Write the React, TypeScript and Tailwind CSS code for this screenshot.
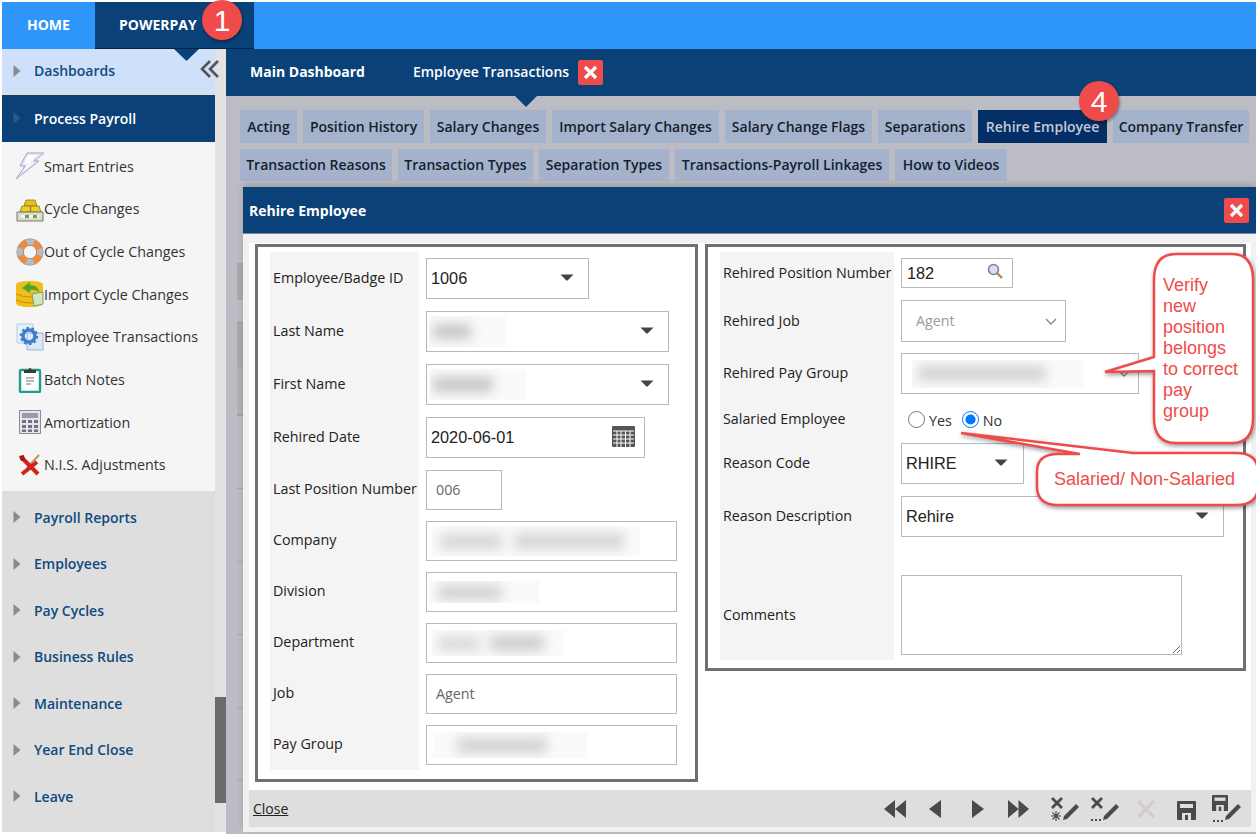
import type { ReactNode } from "react";

function Arrow({ dark }: { dark?: boolean }) {
  return (
    <svg width="8" height="14" viewBox="0 0 8 14" className="shrink-0">
      <path d="M0.5 1 L7.5 7 L0.5 13 Z" fill={dark ? "#33557f" : "#8a8a8a"} />
    </svg>
  );
}

function DropArrow() {
  return (
    <svg width="14" height="7" viewBox="0 0 14 7" className="shrink-0 -mt-[2px]">
      <path d="M0.5 0.5 H13.5 L7.6 6.5 H6.4 Z" fill="#444" />
    </svg>
  );
}

function Bolt() {
  return (
    <svg width="28" height="28" viewBox="0 0 28 28">
      <path d="M11 1 L28 1 L18 9 L23 9 L0 27 L9 14 L4 14 Z" fill="#e6e6f6" stroke="#a6a6c0" strokeWidth="1" />
      <path d="M12 3 L22 3 L14 10 L18 10 L7 20 L12 12 L8 12 Z" fill="#fafaff" />
    </svg>
  );
}

function Gold() {
  return (
    <svg width="28" height="28" viewBox="0 0 28 28">
      <path d="M8 11 L10 5 H19 L21 11 Z" fill="#e7c11b" stroke="#8c7a16" strokeWidth="0.8" />
      <path d="M4 17 L6 11 H14 L15 17 Z M14 17 L15 11 H23 L25 17 Z" fill="#f0cd28" stroke="#8c7a16" strokeWidth="0.8" />
      <path d="M1 17 H27 V26 H1 Z" fill="#d8dccb" stroke="#757b66" strokeWidth="1" />
      <path d="M5 20 H23 V23 H5 Z" fill="#f5f7ee" />
      <path d="M9 20 H13 V23 H9 Z M17 20 H21 V23 H17 Z" fill="#7d9a52" />
    </svg>
  );
}

function Buoy() {
  return (
    <svg width="28" height="28" viewBox="0 0 28 28">
      <circle cx="14" cy="14" r="10" fill="none" stroke="#ee8b3e" strokeWidth="6.5" />
      <circle cx="14" cy="14" r="10" fill="none" stroke="#b4bcc6" strokeWidth="6.5" strokeDasharray="7 8.7" strokeDashoffset="3.5" />
      <circle cx="14" cy="14" r="13.2" fill="none" stroke="#9aa0a8" strokeWidth="0.7" />
      <circle cx="14" cy="14" r="6.6" fill="none" stroke="#a0764e" strokeWidth="0.7" />
    </svg>
  );
}

function ImportCycle() {
  return (
    <svg width="28" height="28" viewBox="0 0 28 28">
      <path d="M0 5 Q0 1 13 1 Q27 1 27 5 V23 Q27 27 13 27 Q0 27 0 23 Z" fill="#f0bd1c" />
      <path d="M0 14 Q13 20 27 14 M0 20 Q13 26 27 20" fill="none" stroke="#c6900e" strokeWidth="1" />
      <path d="M6 8 L14 2 V5 Q22 5 23 12 Q19 9 14 10 V13 Z" fill="#4ea629" />
      <path d="M16 14 L27 12 V24 L18 26 Z" fill="#cfe8b4" stroke="#7d9a7a" strokeWidth="1" />
    </svg>
  );
}

function GearDoc() {
  return (
    <svg width="28" height="28" viewBox="0 0 28 28">
      <path d="M1 1 H17 V20 H1 Z" fill="#e6effa" stroke="#b8cce6" strokeWidth="1" />
      <path d="M11 10 H27 V27 H11 Z" fill="#d9e7f6" stroke="#9ab8d8" strokeWidth="1" />
      <circle cx="13" cy="13" r="6" fill="none" stroke="#3f7fc8" strokeWidth="3.5" />
      <circle cx="13" cy="13" r="8" fill="none" stroke="#3f7fc8" strokeWidth="2.5" strokeDasharray="2.5 2.5" />
    </svg>
  );
}

function Clipboard() {
  return (
    <svg width="24" height="26" viewBox="0 0 24 26">
      <rect x="2" y="3" width="20" height="22" rx="1" fill="#fff" stroke="#1f9d8f" strokeWidth="2.4" />
      <path d="M6 6 H18 V3 H14 Q12 -1 10 3 H6 Z" fill="#3b3b3b" />
      <path d="M8 11 H16 M8 14 H16 M8 17 H13" stroke="#777" strokeWidth="1.2" />
    </svg>
  );
}

function Calc() {
  return (
    <svg width="22" height="24" viewBox="0 0 22 24">
      <rect x="0.5" y="0.5" width="21" height="23" fill="#e4e4ec" stroke="#8a8a9c" />
      <rect x="3" y="3" width="16" height="5" fill="#9a9aa8" />
      <path d="M3 10 H7 V13 H3 Z M9 10 H13 V13 H9 Z M15 10 H19 V13 H15 Z M3 15 H7 V18 H3 Z M9 15 H13 V18 H9 Z M15 15 H19 V18 H15 Z M3 19.5 H7 V22 H3 Z M9 19.5 H13 V22 H9 Z M15 19.5 H19 V22 H15 Z" fill="#70707e" />
    </svg>
  );
}

function Tools() {
  return (
    <svg width="24" height="22" viewBox="0 0 24 22">
      <path d="M21 1 L9 14" stroke="#b79a62" strokeWidth="2" />
      <path d="M3 3 L20 20" stroke="#d3211c" strokeWidth="4" />
      <path d="M19 8 L4 20" stroke="#d3211c" strokeWidth="4" />
      <path d="M1 2 L6 1 L7 6 L3 7 Z" fill="#a81612" />
    </svg>
  );
}

const penPath = "M14 20 L26 8 L29 11 L17 23 L13 24 Z";

function Tri({ d, w }: { d: string; w: number }) {
  return (
    <svg width={w} height="26" viewBox={`0 0 ${w} 26`} className="shrink-0">
      <path d={d} fill="#4a4a4a" />
    </svg>
  );
}

function XPen({ star }: { star?: boolean }) {
  return (
    <svg width="30" height="26" viewBox="0 0 30 26" className="shrink-0">
      <path d="M2 2 L12 12 M12 2 L2 12" stroke="#4a4a4a" strokeWidth="2.8" />
      <path d={penPath} fill="#4a4a4a" />
      {star ? (
        <path d="M6 15 V25 M1 20 H11 M2.5 16.5 L9.5 23.5 M9.5 16.5 L2.5 23.5" stroke="#4a4a4a" strokeWidth="1.1" />
      ) : (
        <path d="M1 24 H3 M5 24 H7 M9 24 H11" stroke="#4a4a4a" strokeWidth="2" />
      )}
    </svg>
  );
}

function Floppy({ size, x, y }: { size: number; x: number; y: number }) {
  const s = size / 19;
  return (
    <g transform={`translate(${x} ${y}) scale(${s})`}>
      <path d="M0 1 Q0 0 1 0 H18 Q19 0 19 1 V18 Q19 19 18 19 H1 Q0 19 0 18 Z" fill="#4a4a4a" />
      <path d="M3 3 H16 V7 H3 Z" fill="#dedede" />
      <path d="M5 12 H14 V19 H11 V14 H8 V19 H5 Z" fill="#dedede" />
    </g>
  );
}

function Footer() {
  return (
    <div className="h-[37px] bg-[#dedede] flex items-center pl-[4px] pr-[9px]">
      <span className="text-[14px] text-[#222] underline">Close</span>
      <div className="ml-auto flex items-center">
        <Tri w={22} d="M0 13 L11 4 V22 Z M11 13 L22 4 V22 Z" />
        <div className="ml-[23px]"><Tri w={12} d="M0 13 L12 4 V22 Z" /></div>
        <div className="ml-[31px]"><Tri w={12} d="M12 13 L0 4 V22 Z" /></div>
        <div className="ml-[24px]"><Tri w={21} d="M10.5 13 L0 4 V22 Z M21 13 L10.5 4 V22 Z" /></div>
        <div className="ml-[21px]"><XPen star /></div>
        <div className="ml-[10px]"><XPen /></div>
        <svg width="20" height="26" viewBox="0 0 20 26" className="ml-[16px] shrink-0">
          <path d="M2 5 L18 21 M18 5 L2 21" stroke="#d6cbcb" strokeWidth="3.6" />
        </svg>
        <svg width="19" height="26" viewBox="0 0 19 26" className="ml-[21px] shrink-0">
          <Floppy size={19} x={0} y={5} />
        </svg>
        <svg width="30" height="28" viewBox="0 0 30 28" className="ml-[16px] shrink-0">
          <Floppy size={16} x={0} y={0} />
          <path d="M14 21 L26 9 L29 12 L17 24 L13 25 Z" fill="#4a4a4a" />
          <path d="M1 26 H3 M5 26 H7 M9 26 H11" stroke="#4a4a4a" strokeWidth="2" />
        </svg>
      </div>
    </div>
  );
}

function Smudge({ className, children }: { className: string; children: ReactNode }) {
  return <div className={`flex items-center overflow-hidden bg-[#fafafa] ${className}`}>{children}</div>;
}

function Field({ className, children, drop }: { className: string; children?: ReactNode; drop?: boolean }) {
  return (
    <div className={`bg-white border border-[#b8b8b8] flex items-center justify-between shrink-0 ${className}`}>
      {children}
      {drop && <DropArrow />}
    </div>
  );
}

function Row({ label, height, wide, children }: { label: ReactNode; height: string; wide?: boolean; children: ReactNode }) {
  return (
    <div className={`flex ${height}`}>
      <div className={`bg-[#f4f4f4] flex items-center pl-[3px] text-[14.3px] text-[#222] whitespace-nowrap ${wide ? "w-[174px] pb-[1px]" : "w-[149px] pb-[2px]"}`}>
        {label}
      </div>
      <div className="ml-[7px] flex items-center">{children}</div>
    </div>
  );
}

const val = "font-['Liberation_Sans',sans-serif] text-[16.3px] text-[#222]";

function LeftPanel() {
  return (
    <div className="w-[443px] h-[538px] shrink-0 border-[3px] border-[#707070] pt-[5px] pl-[12px]">
      <Row label="Employee/Badge ID" height="h-[53px]">
        <Field drop className="w-[163px] h-[41px] pl-[4px] pr-[14px]"><span className={val}>1006</span></Field>
      </Row>
      <Row label="Last Name" height="h-[53px]">
        <Field drop className="w-[243px] h-[41px] pl-[2px] pr-[14px]">
          <Smudge className="w-[77px] h-[31px]">
            <div className="ml-[4px] w-[38px] h-[15px] bg-[#c6c6c6] blur-[6px]" />
          </Smudge>
        </Field>
      </Row>
      <Row label="First Name" height="h-[53px]">
        <Field drop className="w-[243px] h-[41px] pl-[3px] pr-[14px]">
          <Smudge className="w-[97px] h-[31px]">
            <div className="ml-[3px] w-[60px] h-[15px] bg-[#c6c6c6] blur-[6px]" />
          </Smudge>
        </Field>
      </Row>
      <Row label="Rehired Date" height="h-[53px]">
        <Field className="w-[219px] h-[41px] pl-[4px] pr-[9px]">
          <span className={val}>2020-06-01</span>
          <svg width="23" height="21" viewBox="0 0 23 21" className="-mt-[3px]">
            <rect width="23" height="21" rx="1" fill="#555" />
            <path d="M1 5 H22 M1 9 H22 M1 13 H22 M1 17 H22 M5 5 V21 M9 5 V21 M13.5 5 V21 M18 5 V21" stroke="#fff" strokeWidth="1" />
          </svg>
        </Field>
      </Row>
      <Row label="Last Position Number" height="h-[51px]">
        <Field className="w-[76px] h-[40px] mt-[1px] pl-[9px] text-[14.3px] text-[#666]">006</Field>
      </Row>
      <Row label="Company" height="h-[51px]">
        <Field className="w-[251px] h-[40px] mt-[1px] pl-[5px]">
          <Smudge className="w-[208px] h-[30px] gap-[12px]">
            <div className="ml-[8px] w-[62px] h-[15px] bg-[#d6d6d6] blur-[6px]" />
            <div className="w-[110px] h-[16px] bg-[#d6d6d6] blur-[6px]" />
          </Smudge>
        </Field>
      </Row>
      <Row label="Division" height="h-[51px]">
        <Field className="w-[251px] h-[40px] mt-[1px] pl-[3px]">
          <Smudge className="w-[109px] h-[22px]">
            <div className="ml-[8px] w-[64px] h-[15px] bg-[#d2d2d2] blur-[6px]" />
          </Smudge>
        </Field>
      </Row>
      <Row label="Department" height="h-[51px]">
        <Field className="w-[251px] h-[40px] mt-[1px] pl-[5px]">
          <Smudge className="w-[132px] h-[26px] gap-[10px]">
            <div className="ml-[6px] w-[42px] h-[15px] bg-[#dadada] blur-[6px]" />
            <div className="w-[54px] h-[16px] bg-[#cfcfcf] blur-[6px]" />
          </Smudge>
        </Field>
      </Row>
      <Row label="Job" height="h-[51px]">
        <Field className="w-[251px] h-[40px] mt-[1px] pl-[9px] text-[14.3px] text-[#666]">Agent</Field>
      </Row>
      <Row label="Pay Group" height="h-[51px]">
        <Field className="w-[251px] h-[40px] mt-[1px] pl-[6px]">
          <Smudge className="w-[154px] h-[26px]">
            <div className="ml-[24px] w-[90px] h-[15px] bg-[#d2d2d2] blur-[6px]" />
          </Smudge>
        </Field>
      </Row>
    </div>
  );
}

function RightPanel() {
  return (
    <div className="w-[541px] h-[427px] shrink-0 border-[3px] border-[#707070] pt-[5px] pl-[12px]">
      <Row wide label="Rehired Position Number" height="h-[42px]">
        <Field className="w-[112px] h-[30px] pl-[5px] pr-[9px]">
          <span className={`${val} mt-[1px]`}>182</span>
          <svg width="16" height="16" viewBox="0 0 16 16" className="-mt-[4px]">
            <path d="M10 10 L15 15" stroke="#b08a4a" strokeWidth="2.4" />
            <circle cx="6.5" cy="6.5" r="5" fill="#d8dcf4" stroke="#7e84a8" strokeWidth="1.6" />
          </svg>
        </Field>
      </Row>
      <Row wide label="Rehired Job" height="h-[54px]">
        <Field className="w-[165px] h-[42px] pl-[14px] pr-[8px] text-[14.3px] text-[#9a9a9a]">
          Agent
          <svg width="12" height="7" viewBox="0 0 12 7"><path d="M1 1 L6 6 L11 1" fill="none" stroke="#888" strokeWidth="1.4" /></svg>
        </Field>
      </Row>
      <Row wide label="Rehired Pay Group" height="h-[51px]">
        <Field className="w-[238px] h-[41px] pl-[10px] pr-[8px]">
          <Smudge className="w-[172px] h-[28px]">
            <div className="ml-[6px] w-[128px] h-[15px] bg-[#d2d2d2] blur-[6px]" />
          </Smudge>
          <svg width="12" height="7" viewBox="0 0 12 7"><path d="M1 1 L6 6 L11 1" fill="none" stroke="#888" strokeWidth="1.4" /></svg>
        </Field>
      </Row>
      <Row wide label="Salaried Employee" height="h-[40px]">
        <div className="flex items-center pl-[7px] text-[14.3px] text-[#333]">
          <input type="radio" name="salaried" className="w-[17px] h-[17px] m-0" />
          <span className="ml-[4px] mt-[4px]">Yes</span>
          <input type="radio" name="salaried" defaultChecked className="w-[17px] h-[17px] m-0 ml-[10px]" />
          <span className="ml-[4px] mt-[4px]">No</span>
        </div>
      </Row>
      <Row wide label="Reason Code" height="h-[49px]">
        <Field drop className="w-[123px] h-[41px] pl-[4px] pr-[15px]"><span className={val}>RHIRE</span></Field>
      </Row>
      <Row wide label="Reason Description" height="h-[57px]">
        <Field drop className="w-[323px] h-[41px] pl-[4px] pr-[14px]"><span className={val}>Rehire</span></Field>
      </Row>
      <div className="flex h-[115px]">
        <div className="w-[174px] bg-[#f4f4f4] flex items-center pl-[3px] pt-[25px] text-[14.3px] text-[#222]">Comments</div>
        <textarea readOnly className="ml-[7px] mt-[30px] w-[281px] h-[80px] bg-white border border-[#b8b8b8] outline-none" />
      </div>
    </div>
  );
}

function Dialog() {
  return (
    <div className="flex-1 min-w-0 h-[645px] flex flex-col shadow-[0_-3px_6px_rgba(0,0,0,0.15)]">
      <div className="h-[47px] bg-[#0a4178] border-b border-[#7c8a98] flex items-center justify-between pl-[6px] pr-[7px]">
        <span className="text-white font-bold text-[14px]">Rehire Employee</span>
        <CloseBtn />
      </div>
      <div className="flex-1 bg-[#f1f1f1] pt-[9px] pl-[6px] pr-[5px] pb-[5px] flex flex-col">
        <div className="h-[547px] bg-white pt-[1px] pl-[6px] flex items-start gap-[7px]">
          <LeftPanel />
          <RightPanel />
        </div>
        <Footer />
      </div>
    </div>
  );
}

function CloseBtn() {
  return (
    <div className="w-[25px] h-[25px] rounded-[2px] bg-[#ef4b4b] flex items-center justify-center">
      <svg width="15" height="15" viewBox="0 0 15 15">
        <path d="M2 2 L13 13 M13 2 L2 13" stroke="#fff" strokeWidth="3.2" />
      </svg>
    </div>
  );
}

const icons = [
  { label: "Smart Entries", icon: <Bolt /> },
  { label: "Cycle Changes", icon: <Gold /> },
  { label: "Out of Cycle Changes", icon: <Buoy /> },
  { label: "Import Cycle Changes", icon: <ImportCycle /> },
  { label: "Employee Transactions", icon: <GearDoc /> },
  { label: "Batch Notes", icon: <Clipboard /> },
  { label: "Amortization", icon: <Calc /> },
  { label: "N.I.S. Adjustments", icon: <Tools /> },
];

const lowerNav = ["Payroll Reports", "Employees", "Pay Cycles", "Business Rules", "Maintenance", "Year End Close", "Leave"];

function Sidebar() {
  return (
    <div className="w-[224px] h-[783px] flex shrink-0">
      <div className="w-[213px] bg-[#dedede] flex flex-col">
        <div className="h-[43px] bg-[#cfe0fa] flex items-center pl-[11px] gap-[13px] text-[14px] font-semibold text-[#0f4a80]">
          <Arrow />Dashboards
        </div>
        <div className="h-[47px] mt-[3px] bg-[#0a4178] flex items-center pl-[11px] pb-[1px] gap-[13px] text-[14px] font-semibold text-white">
          <Arrow dark />Process Payroll
        </div>
        <div className="h-[349px] bg-[#f5f5f5] pt-[3px]">
          {icons.map((it) => (
            <div key={it.label} className="h-[42.7px] flex items-center text-[14.3px] text-[#333]">
              <div className="w-[42px] flex justify-center pl-[13px] shrink-0">{it.icon}</div>
              {it.label}
            </div>
          ))}
        </div>
        <div className="pt-[3px]">
          {lowerNav.map((l) => (
            <div key={l} className="h-[46.5px] flex items-center pl-[11px] gap-[13px] text-[14px] font-semibold text-[#0f4a80]">
              <Arrow />{l}
            </div>
          ))}
        </div>
      </div>
      <div className="w-[11px] bg-[#e2e2e2] pt-[648px]">
        <div className="h-[106px] bg-[#6a6a6a]" />
      </div>
    </div>
  );
}

const tabsOne = [
  { label: "Acting", w: "w-[57px]" },
  { label: "Position History", w: "w-[121px]" },
  { label: "Salary Changes", w: "w-[116px]" },
  { label: "Import Salary Changes", w: "w-[167px]" },
  { label: "Salary Change Flags", w: "w-[147px]" },
  { label: "Separations", w: "w-[94px]" },
  { label: "Rehire Employee", w: "w-[129px]" },
  { label: "Company Transfer", w: "w-[136px]" },
];
const tabsTwo = [
  { label: "Transaction Reasons", w: "w-[152px]" },
  { label: "Transaction Types", w: "w-[135px]" },
  { label: "Separation Types", w: "w-[130px]" },
  { label: "Transactions-Payroll Linkages", w: "w-[214px]" },
  { label: "How to Videos", w: "w-[112px]" },
];

function Tab({ label, className }: { label: string; className: string }) {
  const active = label === "Rehire Employee";
  return (
    <div className={`flex items-center justify-center text-[14px] font-semibold whitespace-nowrap ${className} ${active ? "bg-[#042f66] text-[#c3c9d6]" : "bg-[#a5b2cc] text-[#16202c]"}`}>
      {label}
    </div>
  );
}

function Main() {
  return (
    <div className="flex-1 min-w-0 bg-[#bcbcc4] flex flex-col relative">
      <div className="h-[47px] bg-[#0a4178] flex items-center pl-[24px] text-white text-[14px] shrink-0">
        <span className="mb-[2px] font-bold">Main Dashboard</span>
        <span className="ml-[48px] mb-[2px] font-semibold">Employee Transactions</span>
        <div className="ml-[9px]"><CloseBtn /></div>
      </div>
      <div className="pt-[14px] pl-[14px] pb-[6px] flex flex-col gap-[6px]">
        <div className="flex gap-[6px]">
          {tabsOne.map((t) => <Tab key={t.label} label={t.label} className={`h-[33px] ${t.w}`} />)}
        </div>
        <div className="flex gap-[6px]">
          {tabsTwo.map((t) => <Tab key={t.label} label={t.label} className={`h-[32px] pb-[2px] ${t.w}`} />)}
        </div>
      </div>
      <div className="flex">
        <div className="w-[17px] shrink-0 pl-[11px] pt-[76px] overflow-hidden">
          <div className="h-[37px] bg-[#a9a9b0]" />
          <div className="h-[21px]" />
          <div className="h-[46px] bg-[#a9a9b0]" />
          <div className="h-[49px] bg-[#b1b1b8] border-b-2 border-[#a0a0a8]" />
          <div className="h-[73px] border-b border-[#a8a8b0]" />
          <div className="h-[73px] border-b border-[#a8a8b0]" />
          <div className="h-[73px] border-b border-[#a8a8b0]" />
          <div className="h-[73px] border-b border-[#a8a8b0]" />
          <div className="h-[73px] border-b border-[#a8a8b0]" />
        </div>
        <Dialog />
      </div>
    </div>
  );
}

function Badge({ className, children }: { className: string; children: ReactNode }) {
  return (
    <div className={`absolute rounded-full bg-[#ef4b4b] text-white flex items-center justify-center font-['Liberation_Sans',sans-serif] text-[30px] shadow-[1px_2px_3px_rgba(0,0,0,0.35)] ${className}`}>
      {children}
    </div>
  );
}

function Annotations() {
  return (
    <>
      <svg width="1256" height="834" viewBox="0 0 1256 834" className="absolute left-0 top-0 pointer-events-none">
        <path
          d="M1176 254 H1232 Q1253 254 1253 280 V418 Q1253 443 1232 443 H1176 Q1154 443 1154 418 V371 L1105 372 L1154 357 V280 Q1154 254 1176 254 Z"
          fill="#fff"
          stroke="#ef4b4b"
          strokeWidth="2.5"
          className="drop-shadow-[1px_2px_2px_rgba(0,0,0,0.4)]"
        />
        <path
          d="M1058 454 H1080 L961 433 L1133 453 H1236 Q1258 453 1258 472 V486 Q1258 505 1236 505 H1058 Q1037 505 1037 486 V472 Q1037 454 1058 454 Z"
          fill="#fff"
          stroke="#ef4b4b"
          strokeWidth="2.5"
          className="drop-shadow-[1px_2px_2px_rgba(0,0,0,0.4)]"
        />
      </svg>
      <div className="absolute left-[1163px] top-[275px] font-['Liberation_Sans',sans-serif] text-[18px] leading-[21px] text-[#ef4b4b]">
        Verify<br />new<br />position<br />belongs<br />to correct<br />pay<br />group
      </div>
      <div className="absolute left-[1054px] top-[469px] font-['Liberation_Sans',sans-serif] text-[18px] leading-[21px] text-[#ef4b4b] whitespace-nowrap">
        Salaried/ Non-Salaried
      </div>
      <Badge className="left-[202px] top-0 w-[40px] h-[40px]">1</Badge>
      <Badge className="left-[1079px] top-[81px] w-[40px] h-[40px]">4</Badge>
    </>
  );
}

export default function App() {
  return (
    <div className="relative w-[1256px] h-[834px] overflow-hidden bg-white pl-[2px] pt-[2px] flex flex-col font-['Open_Sans',sans-serif]">
      <div className="h-[47px] bg-[#2e96fb] flex shrink-0 text-white font-bold text-[14px]">
        <div className="w-[93px] pl-[25px] pb-[2px] flex items-center">HOME</div>
        <div className="w-[159px] pl-[24px] pb-[2px] bg-[#0a4178] border-b border-[#06223f] flex items-center">POWERPAY</div>
      </div>
      <div className="flex flex-1 min-h-0">
        <Sidebar />
        <Main />
      </div>
      {/* tab pointers and the collapse control sit over the panels */}
      <svg width="25" height="12" viewBox="0 0 25 12" className="absolute left-[174px] top-[49px]">
        <path d="M0 0 H25 L12.5 12 Z" fill="#0a4178" />
      </svg>
      <svg width="22" height="11" viewBox="0 0 22 11" className="absolute left-[515px] top-[96px]">
        <path d="M0 0 H22 L11 11 Z" fill="#0a4178" />
      </svg>
      <svg width="20" height="20" viewBox="0 0 20 20" className="absolute left-[200px] top-[59px]">
        <path d="M10 2 L2 10 L10 18 M18 2 L10 10 L18 18" fill="none" stroke="#555" strokeWidth="2.6" />
      </svg>
      <Annotations />
    </div>
  );
}
